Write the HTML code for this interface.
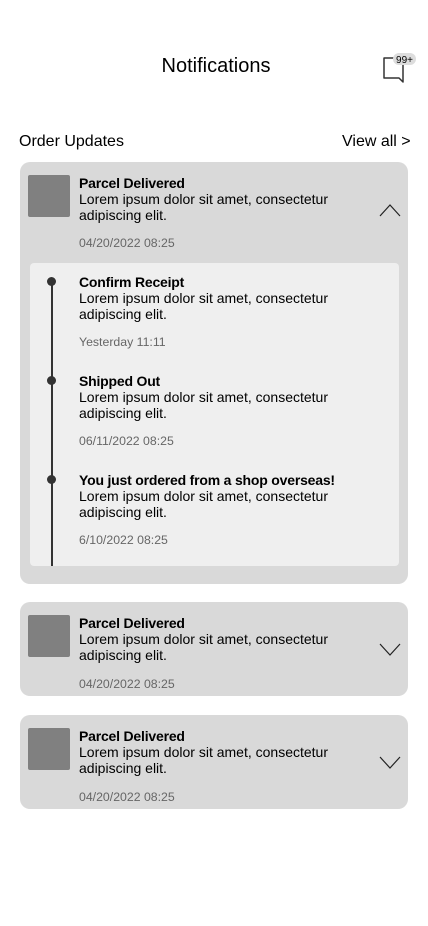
<!DOCTYPE html>
<html><head><meta charset="utf-8"><style>
*{margin:0;padding:0;box-sizing:border-box}
body{width:428px;height:926px;background:#fff;font-family:"Liberation Sans",Roboto,sans-serif;color:#000;position:relative;overflow:hidden}
.a{position:absolute}
.card{position:absolute;left:20px;width:388px;background:#d9d9d9;border-radius:10px}
.th{position:absolute;left:8px;top:13px;width:42px;height:42px;background:#808080;border-radius:2px}
.tx{position:absolute;left:59px;top:13px;font-size:14px;line-height:16px;width:300px}
.tx b{display:block;font-weight:bold;letter-spacing:-0.2px}
.dt{position:absolute;left:59px;font-size:12.3px;color:#666;line-height:14px}
.it{position:absolute;left:79px;font-size:14px;line-height:16px;width:300px}
.it b{display:block;letter-spacing:-0.2px}
.dot{position:absolute;left:47px;width:9px;height:9px;border-radius:50%;background:#333}
</style></head><body>
<div class="a" style="left:0;width:428px;top:54px;text-align:center;font-size:20px;line-height:24px;padding-left:4px">Notifications</div>
<svg class="a" style="left:380px;top:52px" width="40" height="32" viewBox="0 0 40 32">
<path d="M4 6 H23 V30 L19 26 H4 Z" fill="none" stroke="#333" stroke-width="1.5" stroke-linejoin="round"/>
<rect x="13" y="1" width="23" height="12" rx="6" fill="#ddd"/>
<text x="24.5" y="11" font-size="10" text-anchor="middle" font-family="Liberation Sans,sans-serif" fill="#000">99+</text>
</svg>
<div class="a" style="left:19px;top:132px;font-size:16px;line-height:20px">Order Updates</div>
<div class="a" style="left:342px;top:132px;font-size:16px;line-height:20px">View all &gt;</div>

<div class="card" style="top:162px;height:422px">
<div class="th"></div>
<div class="tx"><b>Parcel Delivered</b>Lorem ipsum dolor sit amet, consectetur adipiscing elit.</div>
<div class="dt" style="top:74px">04/20/2022 08:25</div>
<svg class="a" style="left:358px;top:39px" width="24" height="18"><path d="M2 15 L12 4 L22 15" fill="none" stroke="#222" stroke-width="1.2"/></svg>
</div>
<div class="a" style="left:30px;top:263px;width:369px;height:303px;background:#efefef;border-radius:4px"></div>
<div class="a" style="left:51px;top:281px;width:1.5px;height:285px;background:#333"></div>
<div class="dot" style="top:277px"></div>
<div class="dot" style="top:376px"></div>
<div class="dot" style="top:475px"></div>
<div class="it" style="top:274px"><b>Confirm Receipt</b>Lorem ipsum dolor sit amet, consectetur adipiscing elit.</div>
<div class="dt" style="left:79px;top:335px">Yesterday 11:11</div>
<div class="it" style="top:373px"><b>Shipped Out</b>Lorem ipsum dolor sit amet, consectetur adipiscing elit.</div>
<div class="dt" style="left:79px;top:434px">06/11/2022 08:25</div>
<div class="it" style="top:472px"><b>You just ordered from a shop overseas!</b>Lorem ipsum dolor sit amet, consectetur adipiscing elit.</div>
<div class="dt" style="left:79px;top:533px">6/10/2022 08:25</div>

<div class="card" style="top:602px;height:94px">
<div class="th"></div>
<div class="tx"><b>Parcel Delivered</b>Lorem ipsum dolor sit amet, consectetur adipiscing elit.</div>
<div class="dt" style="top:75px">04/20/2022 08:25</div>
<svg class="a" style="left:358px;top:38px" width="24" height="18"><path d="M2 4 L12 15 L22 4" fill="none" stroke="#222" stroke-width="1.2"/></svg>
</div>
<div class="card" style="top:715px;height:94px">
<div class="th"></div>
<div class="tx"><b>Parcel Delivered</b>Lorem ipsum dolor sit amet, consectetur adipiscing elit.</div>
<div class="dt" style="top:75px">04/20/2022 08:25</div>
<svg class="a" style="left:358px;top:38px" width="24" height="18"><path d="M2 4 L12 15 L22 4" fill="none" stroke="#222" stroke-width="1.2"/></svg>
</div>
</body></html>
